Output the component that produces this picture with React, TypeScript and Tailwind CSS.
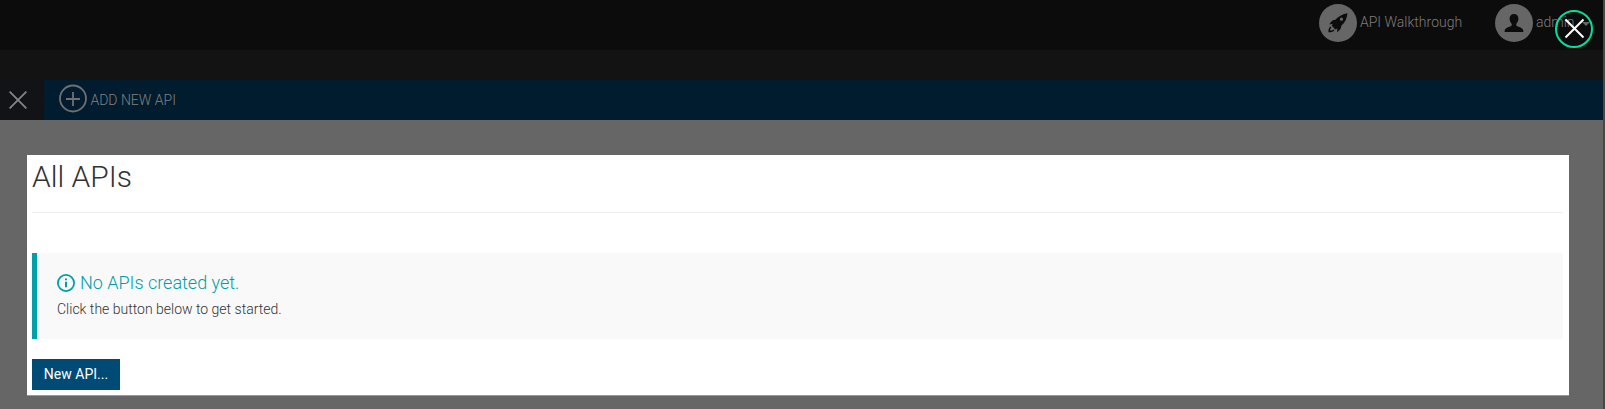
import React from "react";

function Rocket() {
  return (
    <svg width="38" height="38" viewBox="0 0 38 38" className="shrink-0">
      <circle cx="19" cy="19" r="19" fill="#666666" />
      <g fill="#0c0c0c">
        <path
          fillRule="evenodd"
          d="M28.5 9.2C23.8 9.9 19.8 12 16.4 15.8C14 15.8 12.4 17 10.2 20.4L13.6 19.8L12.8 21.8L16.4 25.4L18.4 24.6L18 28.2C20.8 26.2 22.4 24.4 22.3 21.8C26 18.4 28 14.2 28.5 9.2ZM22.5 13.6A1.6 1.6 0 1 1 22.5 16.8A1.6 1.6 0 1 1 22.5 13.6Z"
        />
        <path d="M11.4 22.4C9.6 23.8 9.2 26 9.5 28.2C11.8 28.4 14.2 28 15.4 26.2L14.4 25.4C13.7 26.4 12.6 26.7 11.2 26.6C11.1 25.3 11.5 24.2 12.4 23.4Z" />
      </g>
    </svg>
  );
}

function User() {
  return (
    <svg width="38" height="38" viewBox="0 0 38 38" className="shrink-0">
      <circle cx="19" cy="19" r="19" fill="#666666" />
      <path
        fill="#0c0c0c"
        d="M19 10C22 10 23.6 12 23.4 15C23.3 17.3 22.3 18.7 21.2 20C21.1 21.5 21.7 22.2 23.4 22.8C26.4 23.8 28.4 24.5 28.4 28H9.6C9.6 24.5 11.6 23.8 14.6 22.8C16.3 22.2 16.9 21.5 16.8 20C15.7 18.7 14.7 17.3 14.6 15C14.4 12 16 10 19 10Z"
      />
    </svg>
  );
}

export default function App() {
  return (
    <div className="relative flex h-[409px] w-full overflow-hidden bg-[#666666] font-['Roboto',sans-serif] text-sm font-light">
      <div className="flex min-w-0 flex-1 flex-col">
        <header className="flex h-[50px] shrink-0 items-start bg-[#0c0c0c] pt-1 text-[#7c7c7c]">
          <div className="ml-auto flex w-[176px] gap-[3px]">
            <Rocket />
            <span className="pt-2 leading-5">API Walkthrough</span>
          </div>
          <div className="flex w-[108px] gap-[3px]">
            <User />
            <span className="pt-2 leading-5">admin</span>
            <svg width="8" height="4" viewBox="0 0 8 4" className="mt-[18px] ml-1">
              <path d="M0 0H8L4 4Z" fill="#666666" />
            </svg>
          </div>
        </header>
        <div className="h-[30px] shrink-0 bg-[#131313]" />
        <nav className="flex h-10 shrink-0 bg-[#001c2e] text-[#808080]">
          <div className="w-11 bg-[#121317] pt-[11px] pl-[9px]">
            <svg width="18" height="18" viewBox="0 0 18 18">
              <path d="M.6.6 17.4 17.4M17.4.6.6 17.4" stroke="#858585" strokeWidth="1.8" />
            </svg>
          </div>
          <div className="flex gap-[3.4px] pt-[4px] pl-[15px]">
            <svg width="28" height="29" viewBox="0 0 28 29">
              <circle cx="14" cy="14.5" r="13" fill="none" stroke="#707070" strokeWidth="1.8" />
              <path d="M14 8V22M7 15H21" stroke="#707070" strokeWidth="1.8" />
            </svg>
            <span className="pt-[6px] leading-5">ADD NEW API</span>
          </div>
        </nav>
        <main className="mt-[35px] mr-[34px] ml-[27px] h-[241px] shrink-0 border-b border-[#999999] bg-white pr-[6px] pl-[5px]">
          <h1 className="h-[58px] border-b border-[#eeeeee] pt-[5px] text-[30px] leading-[33px] text-[#333333]">
            All APIs
          </h1>
          <section className="mt-[40px] h-[86px] border-l-[5px] border-[#00a0a8] bg-[#f9f9f9] pt-5 pl-5">
            <h2 className="flex h-5 items-center gap-[5px] text-lg leading-5 text-[#00a0a8]">
              <svg width="18" height="18" viewBox="0 0 18 18">
                <circle cx="9" cy="9" r="8.1" fill="none" stroke="#00a0a8" strokeWidth="1.8" />
                <path d="M8 4.5H10V6.2H8ZM8 7.7H10V13.3H8Z" fill="#00a0a8" />
              </svg>
              No APIs created yet.
            </h2>
            <p className="mt-[6px] leading-5 text-[#333333]">Click the button below to get started.</p>
          </section>
          <button className="mt-5 block h-[31px] w-[88px] bg-[#004b75] text-center text-sm leading-[31px] font-normal text-white">
            New API...
          </button>
        </main>
      </div>
      <div className="w-[2px] shrink-0 bg-[#494841]" />
      <button aria-label="Close" className="absolute top-[10px] right-[12px] h-[38px] w-[38px]">
        <svg width="38" height="38" viewBox="0 0 38 38">
          <circle cx="19" cy="19" r="18" fill="none" stroke="#00e1a0" strokeWidth="2" />
          <path d="M10.5 9.5 28.5 27.5M28.5 9.5 10.5 27.5" stroke="#ffffff" strokeWidth="2" />
        </svg>
      </button>
    </div>
  );
}
